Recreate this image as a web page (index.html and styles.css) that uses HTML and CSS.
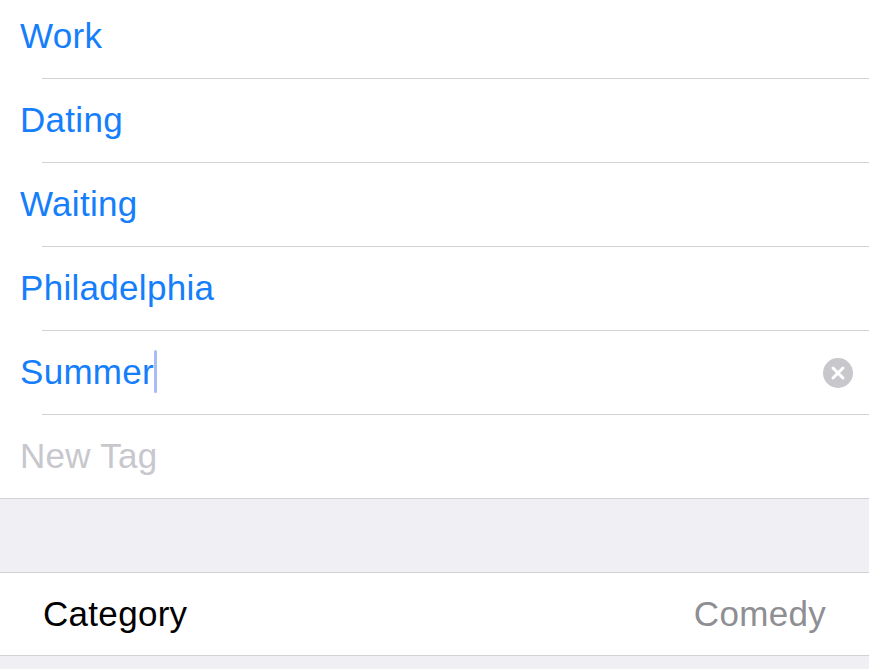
FILE: index.html
```html
<!DOCTYPE html>
<html lang="en">
<head>
<meta charset="utf-8">
<meta name="viewport" content="width=device-width,initial-scale=1">
<title>Tags</title>
<link rel="stylesheet" href="styles.css">
</head>
<body>

<!-- ======= TAGS ======= -->
<ul class="tag-list">
  <li class="tag"><span class="tag-text">Work</span></li>
  <li class="tag"><span class="tag-text">Dating</span></li>
  <li class="tag"><span class="tag-text">Waiting</span></li>
  <li class="tag"><span class="tag-text">Philadelphia</span></li>
  <li class="tag editing">
    <span class="tag-text">Summer<span class="caret"></span></span>
    <button class="clear-btn" aria-label="Clear">
      <svg viewBox="0 0 30 30" width="30" height="30">
        <circle cx="15" cy="15" r="15" fill="#c7c7cc"/>
        <path d="M10 10 L20 20 M20 10 L10 20" stroke="#fff" stroke-width="3" stroke-linecap="round"/>
      </svg>
    </button>
  </li>
  <li class="tag new"><span class="tag-text placeholder">New Tag</span></li>
</ul>

<div class="spacer"></div>

<!-- ======= CATEGORY ======= -->
<div class="group">
  <div class="cell">
    <span class="cell-label">Category</span>
    <span class="cell-value">Comedy</span>
  </div>
</div>

</body>
</html>
```

FILE: styles.css
```css
/* ---------- PALETTE ---------- */
:root{
  --bg:#efeff4;
  --surface:#ffffff;
  --line:#d1d1d6;
  --blue:#157efb;
  --text:#000000;
  --muted:#8e8e93;
  --placeholder:#c7c7cd;
}

/* ---------- RESET ---------- */
*{margin:0;padding:0;box-sizing:border-box;}
html,body{height:100%;}
body{background:var(--bg);font-family:"Liberation Sans",Arial,sans-serif;font-size:35px;letter-spacing:.3px;color:var(--text);overflow:hidden;}

/* ---------- TAG LIST ---------- */
.tag-list{list-style:none;background:var(--surface);margin-top:-5px;border-bottom:1px solid var(--line);}
.tag{height:84px;margin-left:42px;border-bottom:1px solid var(--line);display:flex;align-items:center;justify-content:space-between;padding-right:16px;}
.tag.new{margin-left:0;padding-left:20px;border-bottom:none;height:83px;}
.tag-text{margin-left:-22px;margin-top:-2px;color:var(--blue);display:flex;align-items:center;}
.tag.new .tag-text{margin-left:0;}
.placeholder{color:var(--placeholder)!important;}
.caret{display:inline-block;width:3px;height:43px;border-radius:2px;background:#a9bcf5;margin-left:0;}
.clear-btn{border:none;background:none;display:flex;cursor:pointer;}

/* ---------- SPACER ---------- */
.spacer{height:73px;}

/* ---------- CELL ---------- */
.group{background:var(--surface);border-top:1px solid var(--line);border-bottom:1px solid var(--line);}
.cell{height:82px;display:flex;align-items:center;justify-content:space-between;padding:0 43px;}
.cell-value{color:var(--muted);}
```
